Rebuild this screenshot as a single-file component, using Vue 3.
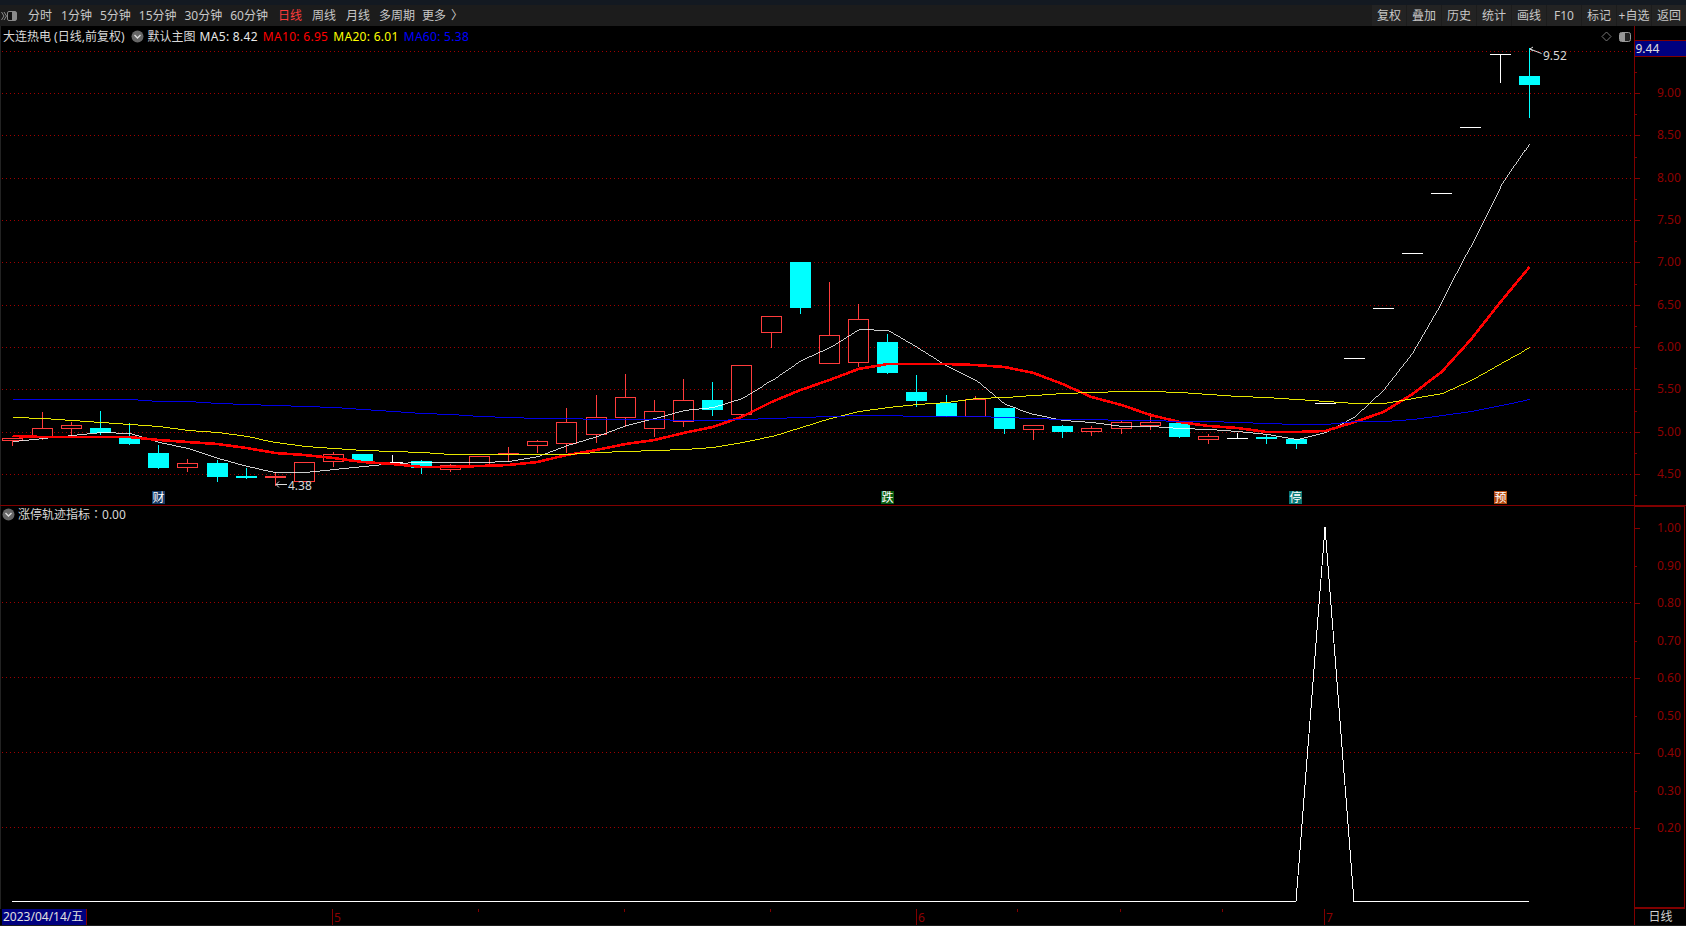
<script setup>
const leftTabs = [
  { t: '分时', g: 9 }, { t: '1分钟', g: 8 }, { t: '5分钟', g: 8 }, { t: '15分钟', g: 8 },
  { t: '30分钟', g: 8 }, { t: '60分钟', g: 10 }, { t: '日线', g: 10, on: true }, { t: '周线', g: 10 },
  { t: '月线', g: 9 }, { t: '多周期', g: 7 }, { t: '更多', g: 5 }, { t: '〉', g: 0 }
]
const rightTabs = ['复权', '叠加', '历史', '统计', '画线', 'F10', '标记', '+自选', '返回']

const candles = [
  [12,'r',438,438,440,445],[42,'r',412,428,436,439],[71,'r',422,425,428,436],[100,'c',411,428,433,434],
  [129,'c',423,438,444,444],[158,'c',445,453,468,468],[187,'r',459,463,467,471],[217,'c',460,463,477,481],
  [246,'c',468,476,478,478],[275,'f',472,476,478,485],[304,'r',462,462,481,481],[333,'r',452,454,461,466],
  [362,'c',454,454,461,461],[392,'w',455,462,462,462],[421,'c',460,461,468,473],[450,'r',464,465,469,471],
  [479,'r',456,456,466,466],[508,'f',447,453,455,461],[537,'r',440,441,445,452],[566,'r',408,422,443,452],
  [596,'r',395,417,434,442],[625,'r',374,397,417,426],[654,'r',400,411,428,436],[683,'r',379,400,421,426],
  [712,'c',382,400,410,415],[741,'r',365,365,414,417],[771,'r',316,316,332,347],[800,'c',262,262,308,313],
  [829,'r',282,335,363,363],[858,'r',304,319,362,366],[887,'c',334,342,373,373],[916,'c',375,392,401,406],
  [946,'c',395,403,416,416],[975,'r',396,399,416,416],[1004,'c',408,408,429,433],[1033,'r',425,425,429,439],
  [1062,'c',425,426,432,437],[1091,'r',426,428,431,435],[1121,'r',421,422,428,433],[1150,'r',413,422,425,429],
  [1179,'c',423,423,437,437],[1208,'r',434,436,439,443],[1237,'w',433,438,438,438],[1266,'c',435,437,439,443],
  [1296,'c',439,439,444,448],[1325,'w',403,403,403,403],[1354,'w',358,358,358,358],[1383,'w',308,308,308,308],
  [1412,'w',253,253,253,253],[1441,'w',193,193,193,193],[1470,'w',127,127,127,127],[1500,'w',54,54,54,82],
  [1529,'c',48,76,85,117]
]
const xs = candles.map(c => c[0])
const colorOf = { r: '#ff3c3c', f: '#ff3c3c', c: '#00ffff', w: '#ffffff' }
const wicks = candles.filter(c => c[2] !== c[5]).map(c => ({ x: c[0] + 0.5, y1: c[2], y2: c[5] + 1, color: colorOf[c[1]] }))
const bodies = candles.map(c => {
  const [x, k, , top, bot] = c
  if (k === 'r') return { x: x - 9.5, y: top + 0.5, w: 20, h: bot - top, fill: '#000', stroke: colorOf.r }
  if (k === 'w') return { x: x - 10, y: top, w: 21, h: 1, fill: '#fff', stroke: 'none' }
  return { x: x - 10, y: top, w: 21, h: bot - top, fill: colorOf[k], stroke: 'none' }
})

const thin = ys => ys.map((y, i) => `${xs[i] + 0.5},${Math.floor(y) + 0.5}`).join(' ')
const wide = ys => ys.map((y, i) => `${xs[i] + 0.5},${Math.round(y)}`).join(' ')
const ma5 = thin([441,438.5,435,432,433,442,448,458,466,472,472,469,466.5,463,462,462.5,462,461,456,445.5,436.5,425.5,418,410,407,398,380.5,360.5,347.5,329,330.5,347,366.5,380,404,414,420.5,422.5,426.5,426.5,428,429,431.5,434,439,432.5,416.5,389,352.5,302.5,246.5,186.5,143])
const ma10 = wide([436,436.5,436.5,436.5,437,440,442,444,447.5,453,455,458,462,464,466.5,467,466,465,462,455,450,444,440,432.5,427,416.5,402,390,380,368.5,364,364,364,365,367,372.5,384,396.5,405,415,422,425.5,428,431.5,432,431,422,411.5,394,371.5,340,301.5,266.5])
const ma20 = thin([417,418,420,422,424,426.5,430,432.5,436.5,442,446,448,450,451,452,454,454,454,454,454,452.5,451.5,450.5,449,447,442.5,436.5,427,418,411,407,404,402,398,397,395,393,392,391,391,392,394,396,397.5,399,401.5,403,403,398,393,380,363,347.5])
const ma60 = thin([399,399,399,399,399.5,401,401.5,403,404.5,405,406,407,409.5,411.5,413,414.5,416,417,418,418,419,419,419,420,420,419,418,417,416.5,415.5,415.5,416,416,416.5,417.5,418.5,419,419,420,420,421,421.5,422.5,423.5,424,424,421.5,421,419,415,411.5,405,399])

const upperGrid = [51, 93, 135, 178, 220, 262, 305, 347, 389, 432, 474]
const upperLabels = [
  { t: '9.00', y: 93 }, { t: '8.50', y: 135 }, { t: '8.00', y: 178 }, { t: '7.50', y: 220 }, { t: '7.00', y: 262 },
  { t: '6.50', y: 305 }, { t: '6.00', y: 347 }, { t: '5.50', y: 389 }, { t: '5.00', y: 432 }, { t: '4.50', y: 474 }
]
const upperMinor = [72, 114, 157, 199, 241, 284, 326, 368, 411, 453, 495]

const lowerGrid = [602, 677, 752, 827]
const lowerLabels = ['1.00', '0.90', '0.80', '0.70', '0.60', '0.50', '0.40', '0.30', '0.20'].map((t, i) => ({
  t, y: Math.round(527 + 37.5 * i), major: i % 2 === 0
}))

const marks = [
  { t: '财', x: 152, fill: '#163a66' }, { t: '跌', x: 881, fill: '#0a5c10' },
  { t: '停', x: 1289, fill: '#0b7a78' }, { t: '预', x: 1494, fill: '#b5490f' }
]
const timeMinor = [478, 624, 770, 1017, 1120, 1222]
const timeMajor = [{ t: '5', x: 332 }, { t: '6', x: 916 }, { t: '7', x: 1324 }]
</script>

<template>
  <div class="app">
    <div class="strip"></div>
    <header class="toolbar">
      <div class="collapse">
        <svg width="16" height="12" viewBox="0 0 16 12">
          <path d="M0.5 2 L3 6 L0.5 10 M3 2 L5.5 6 L3 10" fill="none" stroke="#8a8a8a" />
          <rect x="6.5" y="1.5" width="9" height="9" rx="1.5" fill="#111" stroke="#8a8a8a" />
          <rect x="11" y="2" width="4" height="8" fill="#8a8a8a" />
        </svg>
      </div>
      <nav class="tabs-left">
        <span v-for="tab in leftTabs" :key="tab.t" class="tab" :class="{ on: tab.on, ['g' + tab.g]: true }">{{ tab.t }}</span>
      </nav>
      <nav class="tabs-right">
        <span v-for="tab in rightTabs" :key="tab" class="cell">{{ tab }}</span>
      </nav>
    </header>

    <section class="panel upper">
      <div class="plot">
        <div class="legend">
          <span class="name">大连热电 (日线,前复权)</span>
          <svg class="chev first" width="13" height="13" viewBox="0 0 13 13">
            <circle cx="6.5" cy="6.5" r="6" fill="#666" />
            <path d="M3.5 5 L6.5 8 L9.5 5" fill="none" stroke="#ddd" stroke-width="1.4" />
          </svg>
          <span class="name main">默认主图</span>
          <span class="ma white">MA5: 8.42</span>
          <span class="ma red">MA10: 6.95</span>
          <span class="ma yellow">MA20: 6.01</span>
          <span class="ma blue">MA60: 5.38</span>
        </div>
        <svg class="canvas" viewBox="1 26 1633 479" width="1633" height="479">
          <g shape-rendering="crispEdges">
            <line v-for="y in upperGrid" :key="y" x1="2" x2="1634" :y1="y + 0.5" :y2="y + 0.5" class="grid" />
            <line v-for="(w, i) in wicks" :key="'w' + i" :x1="w.x" :x2="w.x" :y1="w.y1" :y2="w.y2" :stroke="w.color" />
            <rect v-for="(b, i) in bodies" :key="'b' + i" :x="b.x" :y="b.y" :width="b.w" :height="b.h" :fill="b.fill" :stroke="b.stroke" />
            <polyline :points="ma5" class="ln" stroke="#fff" stroke-width="0.8" />
            <polyline :points="ma10" class="ln" stroke="#f00" stroke-width="2.6" />
            <polyline :points="ma20" class="ln" stroke="#ff0" stroke-width="0.9" />
            <polyline :points="ma60" class="ln" stroke="#00f" stroke-width="0.9" />
            <g v-for="m in marks" :key="m.t">
              <rect :x="m.x" y="491" width="13" height="13" :fill="m.fill" />
            </g>
          </g>
          <text v-for="m in marks" :key="'t' + m.t" :x="m.x + 0.5" y="502" class="mark">{{ m.t }}</text>
          <path d="M287 484.5 H276 M279 481.5 L276 484.5 L279 487.5" fill="none" stroke="#ddd" />
          <text x="288" y="490" class="note">4.38</text>
          <path d="M1541.5 53.5 L1530 49 M1533 47 L1530 49 L1533 51" fill="none" stroke="#ddd" />
          <text x="1543" y="60" class="note">9.52</text>
          <path d="M1606.5 32 L1611 36.5 L1606.5 41 L1602 36.5 Z" fill="none" stroke="#777" />
          <rect x="1619.5" y="32.5" width="11" height="9" rx="2" fill="#222" stroke="#999" />
          <rect x="1620" y="33" width="5" height="8" fill="#999" />
        </svg>
      </div>
      <div class="axis">
        <svg viewBox="1635 26 51 479" width="51" height="479">
          <g shape-rendering="crispEdges">
            <rect x="1635" y="41" width="51" height="15" fill="#00007f" />
            <line x1="1635" x2="1686" y1="40.5" y2="40.5" class="ax" />
            <line x1="1635" x2="1686" y1="56.5" y2="56.5" class="ax" />
            <line v-for="l in upperLabels" :key="l.t" x1="1635" x2="1640" :y1="l.y + 0.5" :y2="l.y + 0.5" class="ax" />
            <line v-for="y in upperMinor" :key="y" x1="1635" x2="1637" :y1="y + 0.5" :y2="y + 0.5" class="ax" />
          </g>
          <text x="1635.5" y="53" class="price">9.44</text>
          <text v-for="l in upperLabels" :key="'t' + l.t" x="1657" :y="l.y + 3.5" class="label">{{ l.t }}</text>
        </svg>
      </div>
    </section>

    <section class="panel lower">
      <div class="plot">
        <div class="legend sub">
          <svg class="chev" width="13" height="13" viewBox="0 0 13 13">
            <circle cx="6.5" cy="6.5" r="6" fill="#666" />
            <path d="M3.5 5 L6.5 8 L9.5 5" fill="none" stroke="#ddd" stroke-width="1.4" />
          </svg>
          <span class="name">涨停轨迹指标<span class="colon">：</span>0.00</span>
        </div>
        <svg class="canvas" viewBox="1 506 1633 402" width="1633" height="402">
          <g shape-rendering="crispEdges">
            <line v-for="y in lowerGrid" :key="y" x1="2" x2="1634" :y1="y + 0.5" :y2="y + 0.5" class="grid" />
            <polyline points="12,901.5 1296,901.5 1325,527 1354,901.5 1529,901.5" class="ln" stroke="#fff" />
          </g>
        </svg>
      </div>
      <div class="axis boxed">
        <svg viewBox="1635 506 49 400" width="49" height="400">
          <g shape-rendering="crispEdges">
            <line v-for="l in lowerLabels" :key="l.t" x1="1635" :x2="l.major ? 1640 : 1637" :y1="l.y + 0.5" :y2="l.y + 0.5" class="ax" />
          </g>
          <text v-for="l in lowerLabels" :key="'t' + l.t" x="1657" :y="l.y + 3.5" class="label">{{ l.t }}</text>
        </svg>
      </div>
    </section>

    <footer class="timeline">
      <span class="date">2023/04/14/五</span>
      <svg class="ticks" viewBox="87 908 1547 16" width="1547" height="16">
        <g shape-rendering="crispEdges">
          <line v-for="x in timeMinor" :key="x" :x1="x + 0.5" :x2="x + 0.5" y1="908" y2="911" class="ax" />
          <line v-for="m in timeMajor" :key="m.x" :x1="m.x + 0.5" :x2="m.x + 0.5" y1="908" y2="924" class="ax" />
        </g>
        <text v-for="m in timeMajor" :key="'t' + m.x" :x="m.x + 2" y="921" class="label">{{ m.t }}</text>
      </svg>
      <span class="period">日线</span>
    </footer>
    <div class="foot"></div>
  </div>
</template>

<style>
html, body { margin: 0; background: #000; overflow: hidden; }
</style>

<style scoped>
.app {
  width: 1686px;
  height: 926px;
  background: #000;
  display: flex;
  flex-direction: column;
  font-family: "Noto Sans", "Noto Sans CJK SC", sans-serif;
  font-size: 12px;
  color: #d0d0d0;
  overflow: hidden;
}
.strip { height: 5px; background: #131921; flex: none; }
.toolbar {
  height: 21px;
  flex: none;
  display: flex;
  align-items: center;
  background: #1c1c1c;
  color: #c8c8c8;
}
.collapse { width: 28px; flex: none; display: flex; padding-left: 1px; box-sizing: border-box; }
.tabs-left { display: flex; flex: 1; align-items: center; line-height: 21px; }
.tab { white-space: nowrap; }
.tab.on { color: #ff3c3c; }
.g0 { margin-right: 0; }
.g5 { margin-right: 5px; }
.g7 { margin-right: 7px; }
.g8 { margin-right: 8px; }
.g9 { margin-right: 9px; }
.g10 { margin-right: 10px; }
.tabs-right { display: flex; height: 21px; }
.cell {
  width: 34px;
  margin-left: 1px;
  background: #232323;
  text-align: center;
  line-height: 21px;
  white-space: nowrap;
}
.panel { display: flex; flex: none; border-bottom: 1px solid #800000; box-sizing: border-box; }
.upper { height: 480px; }
.lower { height: 403px; border-bottom: 0; }
.plot { position: relative; width: 1634px; flex: none; box-sizing: border-box; border-left: 1px solid #222; }
.canvas { display: block; }
.legend {
  position: absolute;
  left: 2px;
  top: 1px;
  height: 18px;
  display: flex;
  align-items: center;
  white-space: nowrap;
  z-index: 1;
}
.legend.sub { left: 1px; top: 0; height: 16px; }
.legend.sub .chev { margin-right: 3px; }
.name { color: #d8d8d8; }
.colon { font-family: "Noto Sans CJK TC", sans-serif; }
.chev { flex: none; }
.chev.first { margin: 0 4px 0 6px; }
.main { margin-right: 4px; }
.ma { margin-right: 5px; letter-spacing: 0.3px; }
.white { color: #e8e8e8; }
.red { color: #f00; }
.yellow { color: #ff0; }
.blue { color: #00f; }
.grid { stroke: #a00000; stroke-dasharray: 1 3; }
.ln { fill: none; }
.mark { font-size: 12px; fill: #fff; font-family: "Noto Sans CJK SC", sans-serif; }
.note { font-size: 12px; fill: #d8d8d8; }
.axis { width: 52px; flex: none; border-left: 1px solid #800000; box-sizing: border-box; }
.axis svg { display: block; }
.axis.boxed {
  width: 51px;
  border-top: 2px solid #800000;
  border-right: 1px solid #800000;
  border-bottom: 2px solid #800000;
  margin-top: -1px;
  height: 404px;
}
.ax { stroke: #800000; }
.price { font-size: 12px; fill: #e0e0e0; }
.label { font-size: 12px; fill: #8f0000; }
.timeline { height: 16px; flex: none; display: flex; align-items: stretch; line-height: 16px; }
.date {
  width: 85px;
  margin-left: 2px;
  padding-left: 1px;
  box-sizing: border-box;
  flex: none;
  background: #00007f;
  color: #e0e0e0;
  border-right: 1px solid #800000;
  white-space: nowrap;
  overflow: hidden;
}
.ticks { display: block; flex: none; }
.period { width: 52px; border-left: 1px solid #800000; box-sizing: border-box; text-align: center; color: #d0d0d0; }
.foot { height: 2px; background: #1c1c1c; flex: none; }
</style>
